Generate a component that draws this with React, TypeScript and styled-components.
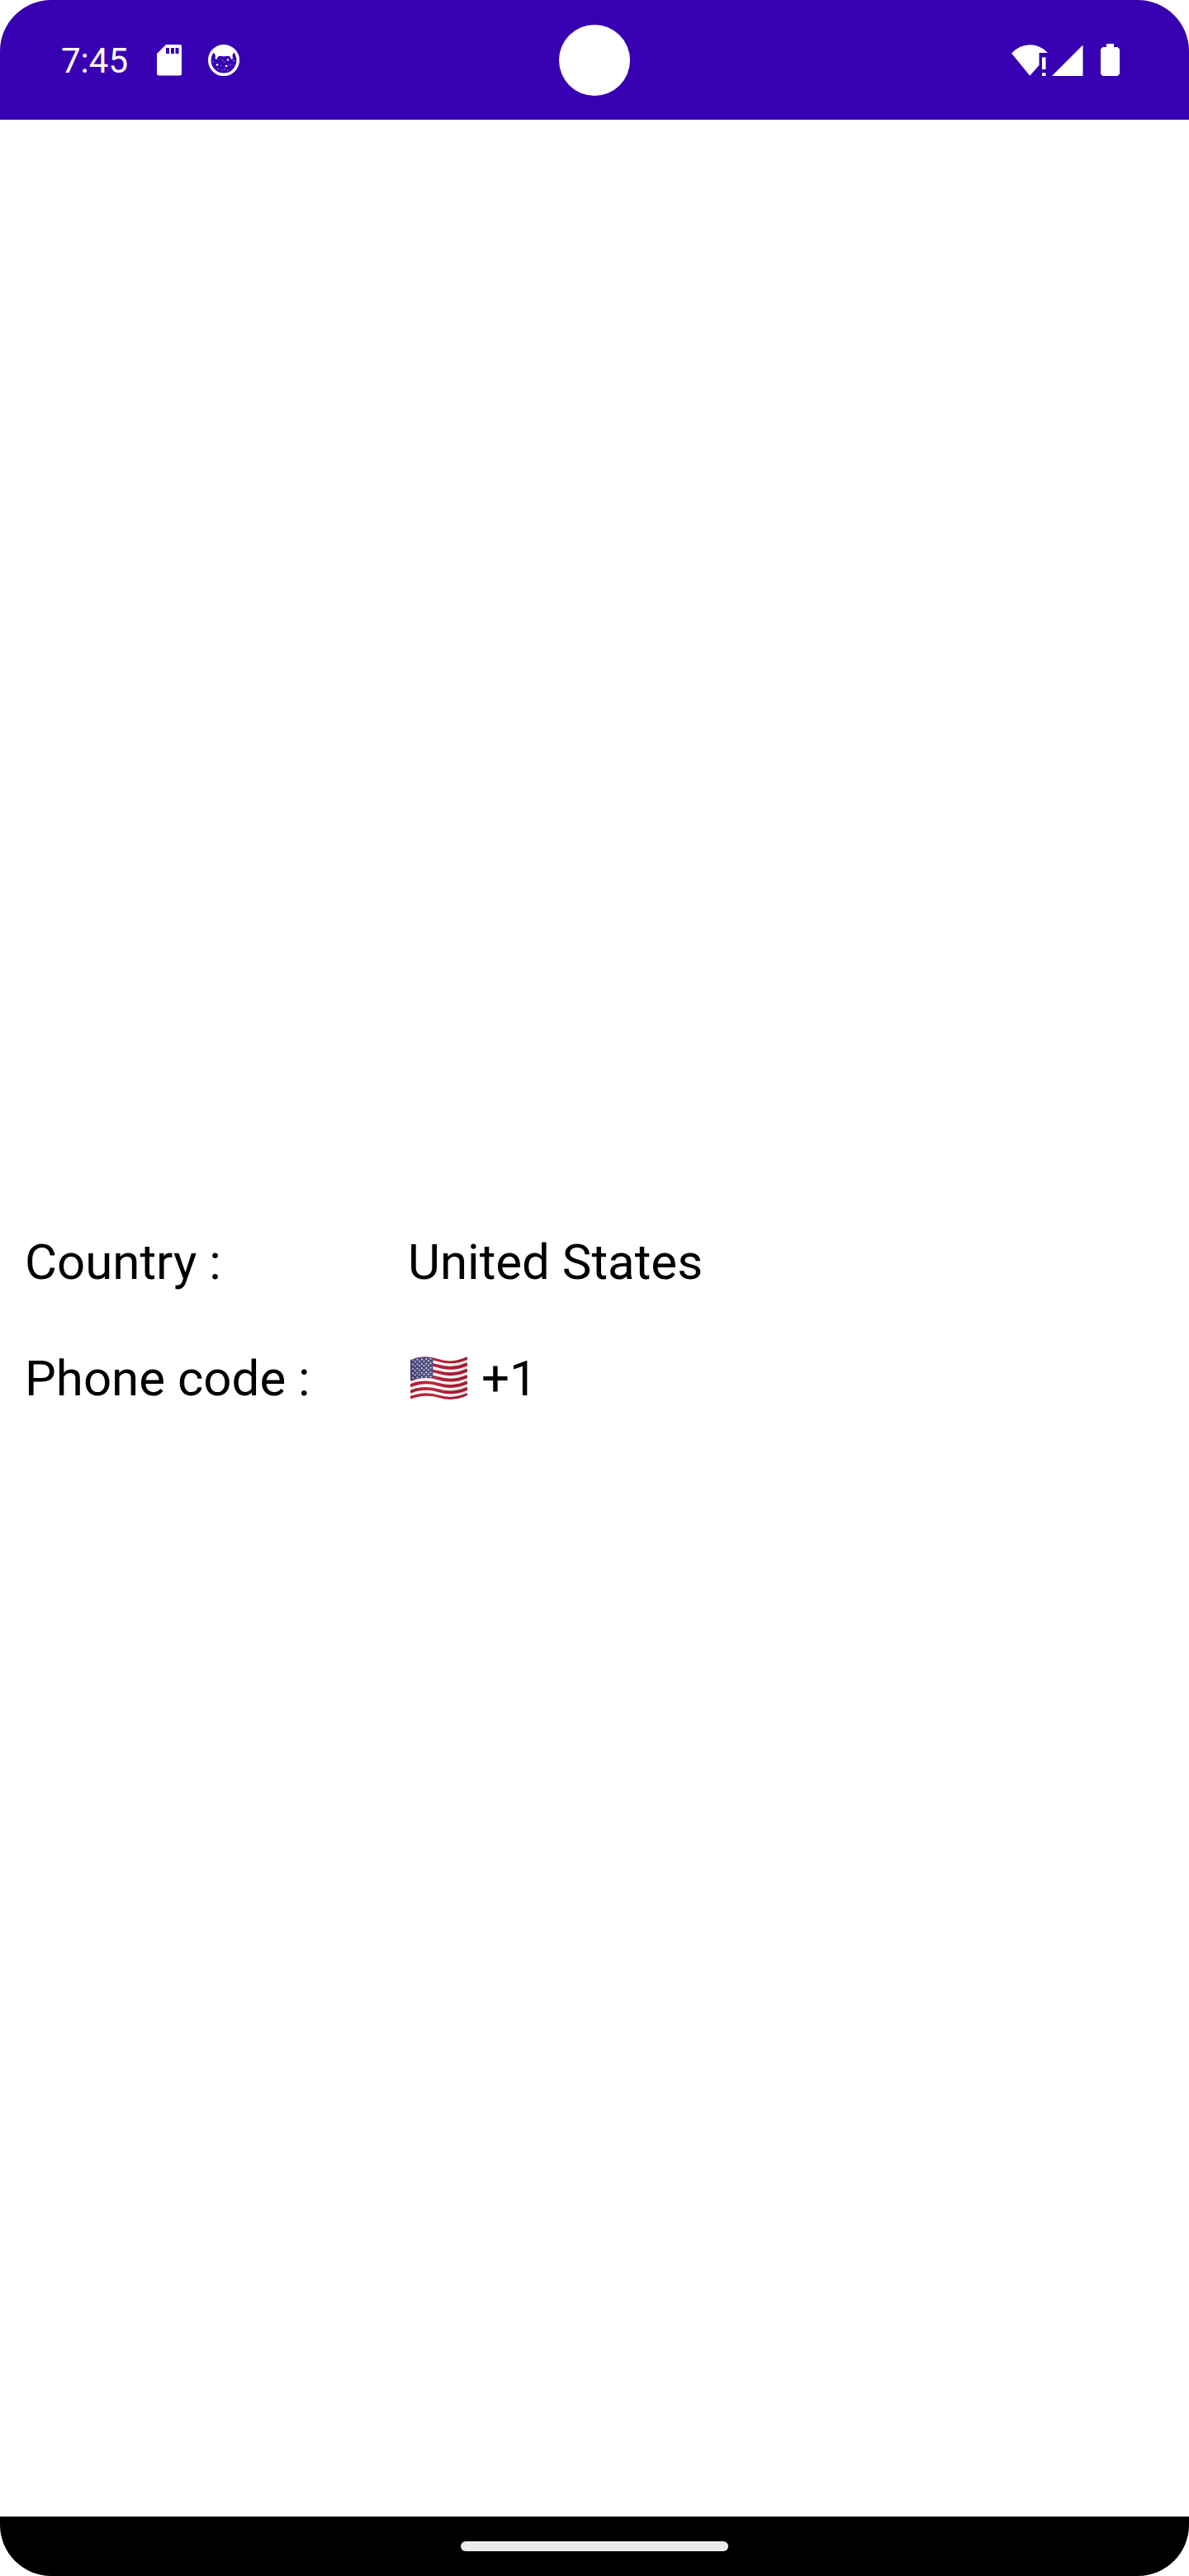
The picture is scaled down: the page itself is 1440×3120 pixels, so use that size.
import React from "react";
import styled, { createGlobalStyle } from "styled-components";

const GlobalStyle = createGlobalStyle`
  * { box-sizing: border-box; }
  body { margin: 0; background: #ffffff; }
`;

const Screen = styled.div`
  display: flex;
  flex-direction: column;
  min-height: 100vh;
  overflow: hidden;
  border-radius: 62px;
  background: #ffffff;
  color: #000000;
  font-family: Roboto, "Liberation Sans", sans-serif;
`;

const StatusBar = styled.header`
  display: grid;
  grid-template-columns: minmax(0, 1fr) 86px minmax(0, 1fr);
  align-items: center;
  height: 145px;
  background: #3700b3;
  color: #ffffff;
`;

const StatusGroup = styled.div<{ $end?: boolean }>`
  display: flex;
  align-items: center;
  justify-content: ${(p) => (p.$end ? "flex-end" : "flex-start")};
  padding: ${(p) => (p.$end ? "0 84px 0 0" : "0 0 0 74px")};
  svg { display: block; fill: currentColor; }
`;

const Clock = styled.time`
  margin-right: 35px;
  padding-top: 3px;
  font-size: 42px;
  line-height: 50px;
`;

const Camera = styled.span`
  width: 86px;
  height: 86px;
  border-radius: 50%;
  background: #ffffff;
`;

const Icon = styled.svg<{ $gap?: number }>`
  margin-right: ${(p) => p.$gap ?? 0}px;
`;

const Content = styled.main`
  display: flex;
  flex: 1;
  flex-direction: column;
  justify-content: center;
`;

const Details = styled.dl`
  margin: 0;
  padding: 4px 18px 0 30px;
`;

const Row = styled.div`
  display: grid;
  grid-template-columns: 1fr 2fr;
  padding: 35px 0;
  font-size: 60px;
  line-height: 71px;
`;

const Label = styled.dt`
  margin: 0;
`;

const Value = styled.dd`
  display: flex;
  align-items: center;
  gap: 17px;
  margin: 0;
`;

const Flag = styled.svg`
  width: 69px;
  height: 52px;
  margin-left: 3px;
`;

const NavBar = styled.footer`
  display: flex;
  align-items: center;
  justify-content: center;
  height: 72px;
  background: #000000;
`;

const HomeHandle = styled.span`
  width: 324px;
  height: 12px;
  border-radius: 6px;
  background: #ebebeb;
`;

const SdCardIcon = () => (
  <Icon $gap={32} width="30" height="38" viewBox="0 0 30 38" aria-hidden="true">
    <path
      fillRule="evenodd"
      d="M11 0H28Q30 0 30 2V35Q30 37.500 27.500 37.500H2.500Q0 37.500 0 35V11ZM11 4V11H15V4ZM17 4V11H21V4ZM22.500 4V11H26.500V4Z"
    />
  </Icon>
);

const CatIcon = () => (
  <Icon width="38" height="38" viewBox="0 0 38 38" aria-hidden="true">
    <circle cx="19" cy="19" r="17.200" fill="none" stroke="currentColor" strokeWidth="3.600" />
    <path d="M5 9Q10 1 19 1T33 9L30 11 29.500 14 30 17 28 18 26.500 14.500Q23 13 19 14.500 15 13 12 14.500L10.500 18 8.500 17 9 14 8 11Z" />
    <g>
      <circle cx="24" cy="18.500" r="1.200" />
      <circle cx="11" cy="24.500" r="1.300" />
      <circle cx="22" cy="26" r="1.300" />
    </g>
    <g opacity="0.55">
      <circle cx="17.500" cy="19" r="0.800" />
      <circle cx="31" cy="19.500" r="0.900" />
      <circle cx="6.500" cy="20.500" r="0.800" />
      <circle cx="19.500" cy="21" r="0.700" />
      <circle cx="27" cy="24" r="0.800" />
      <circle cx="16" cy="25.500" r="0.700" />
      <circle cx="31" cy="25" r="0.700" />
      <circle cx="25" cy="25.500" r="0.700" />
      <circle cx="12" cy="29" r="0.800" />
      <circle cx="20" cy="29.500" r="0.800" />
      <circle cx="17" cy="31" r="0.800" />
      <circle cx="24" cy="31.500" r="0.800" />
    </g>
  </Icon>
);

const WifiIcon = () => (
  <Icon $gap={5} width="44" height="38" viewBox="0 0 44 38" aria-hidden="true">
    <path d="M0 10.500Q10 0.300 22.300 0.300T44 10H33.500V25L22.300 37.800Z" />
    <path d="M37 15.500H41.500V30H37ZM37 34.300H41.500V38H37Z" />
  </Icon>
);

const SignalIcon = () => (
  <Icon $gap={21} width="38" height="38" viewBox="0 0 38 38" aria-hidden="true">
    <path d="M37.500 0.500V38H0Z" />
  </Icon>
);

const BatteryIcon = () => (
  <Icon width="23" height="39" viewBox="0 0 23 39" aria-hidden="true">
    <path d="M7 0H16V4H20.500L23 6.500V36.500L20.500 39H2.500L0 36.500V6.500L2.500 4H7Z" />
  </Icon>
);

const STRIPES = [0, 1, 2, 3, 4, 5, 6];
const STARS = Array.from({ length: 9 }, (_, row) =>
  Array.from({ length: row % 2 ? 4 : 5 }, (_, col) => ({
    x: 3 + col * 5.4 + (row % 2 ? 2.7 : 0),
    y: 4 + row * 2.7 - (row % 2 ? 0.6 : 0) - col * 0.3,
  })),
).flat();

const UsFlag = () => (
  <Flag viewBox="0 0 69 52" role="img" aria-label="United States flag">
    <defs>
      <clipPath id="cloth">
        <path d="M0 4Q17-3 34 3T69 0V47Q52 55 35 50T0 51.500Z" />
      </clipPath>
      <linearGradient id="shade" x1="0" x2="1" y1="0" y2="0">
        <stop offset="0" stopColor="#000" stopOpacity="0.080" />
        <stop offset="0.300" stopColor="#fff" stopOpacity="0.060" />
        <stop offset="0.750" stopColor="#000" stopOpacity="0.080" />
        <stop offset="1" stopColor="#000" stopOpacity="0.120" />
      </linearGradient>
    </defs>
    <g clipPath="url(#cloth)">
      <rect width="69" height="52" fill="#ffffff" />
      {STRIPES.map((i) => (
        <path
          key={i}
          d={`M0 ${4 + i * 7.4}Q17 ${-3 + i * 7.4} 34 ${2.5 + i * 7.4}T69 ${i * 7.4}`}
          transform="translate(0 1.700)"
          fill="none"
          stroke="#b71c35"
          strokeWidth="3.800"
        />
      ))}
      <path d="M0 4Q13-1 27.500 1.300V26Q13 24 0 29Z" fill="#48487f" />
      {STARS.map((s) => (
        <circle key={`${s.x}-${s.y}`} cx={s.x} cy={s.y} r="0.850" fill="#ffffff" />
      ))}
      <rect width="69" height="52" fill="url(#shade)" />
    </g>
  </Flag>
);

export default function App() {
  return (
    <>
      <GlobalStyle />
      <Screen>
        <StatusBar>
          <StatusGroup>
            <Clock>7:45</Clock>
            <SdCardIcon />
            <CatIcon />
          </StatusGroup>
          <Camera />
          <StatusGroup $end>
            <WifiIcon />
            <SignalIcon />
            <BatteryIcon />
          </StatusGroup>
        </StatusBar>
        <Content>
          <Details>
            <Row>
              <Label>Country :</Label>
              <Value>United States</Value>
            </Row>
            <Row>
              <Label>Phone code :</Label>
              <Value>
                <UsFlag />
                <span>+1</span>
              </Value>
            </Row>
          </Details>
        </Content>
        <NavBar>
          <HomeHandle />
        </NavBar>
      </Screen>
    </>
  );
}
